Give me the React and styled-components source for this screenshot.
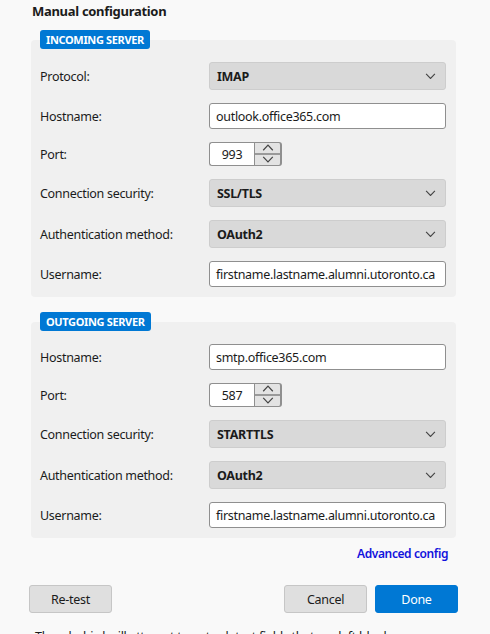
import React from "react";
import styled, { createGlobalStyle } from "styled-components";

const Global = createGlobalStyle`
  html, body { margin: 0; padding: 0; background: #f9f9f9; }
  body { font-family: "Noto Sans", "Open Sans", sans-serif; color: #1b1b1b; overflow: hidden; letter-spacing: -0.3px; }
  * { box-sizing: border-box; }
`;

const Page = styled.div`
  width: 490px;
  height: 634px;
  overflow: hidden;
  padding: 0 34px 0 31px;
  display: flex;
  flex-direction: column;
  & > * { flex-shrink: 0; }
`;

const Title = styled.h1`
  margin: 0 0 0 1px;
  padding-top: 1px;
  font-size: 13px;
  font-weight: 700;
  line-height: 20px;
  height: 30px;
  letter-spacing: -0.3px;
`;

const Group = styled.section`
  display: flex;
  flex-direction: column;
  margin-bottom: ${(p) => p.$mb || 0}px;
`;

const Badge = styled.div`
  align-self: flex-start;
  margin-left: 9px;
  height: 19px;
  margin-bottom: -9px;
  padding: 0 6px;
  background: #0078d4;
  color: #fff;
  font-size: 11px;
  font-weight: 700;
  letter-spacing: -0.35px;
  line-height: 19px;
  border-radius: 3px;
  position: relative;
  z-index: 1;
`;

const Box = styled.div`
  background: #f0f0f0;
  border-radius: 4px;
  padding: 22px 10px 10px 9px;
  display: grid;
  grid-template-columns: 169px 1fr;
  row-gap: 13px;
  align-items: center;
`;

const Label = styled.label`
  font-size: 12.5px;
`;

const Select = styled.div`
  height: 28px;
  background: #d9d9d9;
  border: 1px solid #cdcdcd;
  border-radius: 3px;
  display: flex;
  align-items: center;
  justify-content: space-between;
  padding: 0 9px 0 7px;
  font-size: 12.5px;
  font-weight: 700;
`;

const Input = styled.div`
  height: 26px;
  background: #fff;
  border: 1px solid #8f8f8f;
  border-radius: 3px;
  display: flex;
  align-items: center;
  padding: 0 6px;
  font-size: 12.5px;
  white-space: nowrap;
  overflow: hidden;
`;

const Spin = styled.div`
  display: flex;
  height: 24px;
`;

const SpinField = styled.div`
  width: 45px;
  background: #fff;
  border: 1px solid #8f8f8f;
  border-right: none;
  border-radius: 3px 0 0 3px;
  display: flex;
  align-items: center;
  justify-content: center;
  font-size: 12.5px;
`;

const SpinButtons = styled.div`
  width: 28px;
  display: flex;
  flex-direction: column;
  border: 1px solid #8f8f8f;
  border-right: 2px solid #8f8f8f;
  border-radius: 0 3px 3px 0;
  background: #e3e3e3;
  overflow: hidden;
`;

const SpinBtn = styled.div`
  flex: 1;
  display: flex;
  align-items: center;
  justify-content: center;
  border-top: ${(p) => (p.$bottom ? "2px solid #9a9a9a" : "none")};
`;

const LinkRow = styled.div`
  display: flex;
  justify-content: flex-end;
  padding: 8px 8px 0 0;
  height: 47px;
`;

const Link = styled.a`
  color: #1212dd;
  font-size: 12px;
  font-weight: 600;
  letter-spacing: -0.4px;
  text-decoration: none;
  line-height: 16px;
`;

const Buttons = styled.div`
  display: flex;
  margin: 0 -2px;
  gap: 8px;
`;

const Button = styled.button`
  width: 83px;
  height: 28px;
  border-radius: 3px;
  font-family: inherit;
  letter-spacing: -0.3px;
  font-size: 12.5px;
  border: 1px solid ${(p) => (p.$primary ? "#0078d4" : "#c6c6c6")};
  background: ${(p) => (p.$primary ? "#0078d4" : "#dfdfdf")};
  color: ${(p) => (p.$primary ? "#fff" : "#1b1b1b")};
  margin-left: ${(p) => (p.$push ? "auto" : "0")};
  padding: 0;
`;

const Note = styled.p`
  margin: 15px 0 0 4px;
  font-size: 12.5px;
  white-space: nowrap;
`;

const Chevron = ({ up, size = 12 }) => (
  <svg width={size} height={size * 0.6} viewBox="0 0 10 6" fill="none">
    <path
      d={up ? "M1 5.2 L5 1 L9 5.2" : "M1 0.8 L5 5 L9 0.8"}
      stroke="#444"
      strokeWidth="1"
    />
  </svg>
);

const Dropdown = ({ value }) => (
  <Select>
    <span>{value}</span>
    <Chevron size={11} />
  </Select>
);

const Port = ({ value }) => (
  <Spin>
    <SpinField>{value}</SpinField>
    <SpinButtons>
      <SpinBtn>
        <Chevron up size={12} />
      </SpinBtn>
      <SpinBtn $bottom>
        <Chevron size={12} />
      </SpinBtn>
    </SpinButtons>
  </Spin>
);

export default function App() {
  return (
    <>
      <Global />
      <Page>
        <Title>Manual configuration</Title>
        <Group $mb={15}>
          <Badge>INCOMING SERVER</Badge>
          <Box>
            <Label>Protocol:</Label>
            <Dropdown value="IMAP" />
            <Label>Hostname:</Label>
            <Input>outlook.office365.com</Input>
            <Label>Port:</Label>
            <Port value="993" />
            <Label>Connection security:</Label>
            <Dropdown value="SSL/TLS" />
            <Label>Authentication method:</Label>
            <Dropdown value="OAuth2" />
            <Label>Username:</Label>
            <Input>firstname.lastname.alumni.utoronto.ca</Input>
          </Box>
        </Group>
        <Group>
          <Badge>OUTGOING SERVER</Badge>
          <Box>
            <Label>Hostname:</Label>
            <Input>smtp.office365.com</Input>
            <Label>Port:</Label>
            <Port value="587" />
            <Label>Connection security:</Label>
            <Dropdown value="STARTTLS" />
            <Label>Authentication method:</Label>
            <Dropdown value="OAuth2" />
            <Label>Username:</Label>
            <Input>firstname.lastname.alumni.utoronto.ca</Input>
          </Box>
        </Group>
        <LinkRow>
          <Link href="#">Advanced config</Link>
        </LinkRow>
        <Buttons>
          <Button>Re-test</Button>
          <Button $push>Cancel</Button>
          <Button $primary>Done</Button>
        </Buttons>
        <Note>Thunderbird will attempt to auto-detect fields that are left blank.</Note>
      </Page>
    </>
  );
}
